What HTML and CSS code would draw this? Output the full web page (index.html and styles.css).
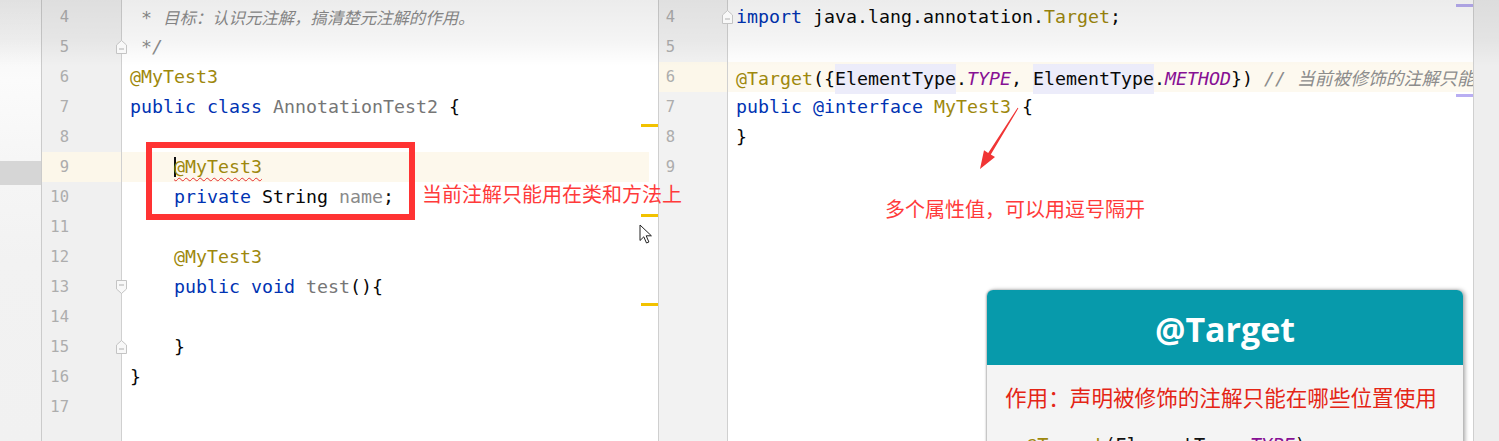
FILE: index.html
```html
<!DOCTYPE html>
<html lang="zh">
<head>
<meta charset="utf-8">
<title>Annotation</title>
<link rel="stylesheet" href="styles.css">
</head>
<body>
<div class="screen">
  <div class="side-strip"><div class="side-mark"></div></div>

  <section class="pane pane-left">
    <div class="gutter">
      <div class="gl"><span class="num">4</span></div>
      <div class="gl"><span class="num">5</span><svg class="fold" width="13" height="16" viewBox="0 0 13 16"><path d="M1.5 6 L6.5 1.5 L11.5 6 V14.5 H1.5 Z" fill="#f8f8f8" stroke="#c4c4c4"/><path d="M4 10 H9" stroke="#b0b0b0"/></svg></div>
      <div class="gl"><span class="num">6</span></div>
      <div class="gl"><span class="num">7</span></div>
      <div class="gl"><span class="num">8</span></div>
      <div class="gl cur"><span class="num">9</span></div>
      <div class="gl"><span class="num">10</span></div>
      <div class="gl"><span class="num">11</span></div>
      <div class="gl"><span class="num">12</span></div>
      <div class="gl"><span class="num">13</span><svg class="fold" width="13" height="16" viewBox="0 0 13 16"><path d="M1.5 1.5 H11.5 V10 L6.5 14.5 L1.5 10 Z" fill="#f8f8f8" stroke="#c4c4c4"/><path d="M4 6 H9" stroke="#b0b0b0"/></svg></div>
      <div class="gl"><span class="num">14</span></div>
      <div class="gl"><span class="num">15</span><svg class="fold" width="13" height="16" viewBox="0 0 13 16"><path d="M1.5 6 L6.5 1.5 L11.5 6 V14.5 H1.5 Z" fill="#f8f8f8" stroke="#c4c4c4"/><path d="M4 10 H9" stroke="#b0b0b0"/></svg></div>
      <div class="gl"><span class="num">16</span></div>
      <div class="gl"><span class="num">17</span></div>
    </div>
    <div class="code">
      <div class="ln cm"> * <span class="cjk cjk-l">目标：认识元注解，搞清楚元注解的作用。</span></div>
      <div class="ln cm"> */</div>
      <div class="ln"><span class="an">@MyTest3</span></div>
      <div class="ln"><span class="kw">public class</span> <span class="dim">AnnotationTest2</span> {</div>
      <div class="ln"></div>
      <div class="ln cur">    <span class="caret"></span><span class="an err">@MyTest3</span></div>
      <div class="ln">    <span class="kw">private</span> String <span class="dim2">name</span>;</div>
      <div class="ln"></div>
      <div class="ln">    <span class="an">@MyTest3</span></div>
      <div class="ln">    <span class="kw">public void</span> <span class="dim">test</span>(){</div>
      <div class="ln"></div>
      <div class="ln">    }</div>
      <div class="ln">}</div>
      <div class="ln"></div>
      <span class="mark mark-y m1"></span>
      <span class="mark mark-y m2"></span>
      <span class="mark mark-y m3"></span>
    </div>
  </section>

  <section class="pane pane-right">
    <div class="gutter">
      <div class="gl"><span class="num">4</span><svg class="fold" width="13" height="16" viewBox="0 0 13 16"><path d="M1.5 6 L6.5 1.5 L11.5 6 V14.5 H1.5 Z" fill="#f8f8f8" stroke="#c4c4c4"/><path d="M4 10 H9" stroke="#b0b0b0"/></svg></div>
      <div class="gl"><span class="num">5</span></div>
      <div class="gl cur"><span class="num">6</span></div>
      <div class="gl"><span class="num">7</span></div>
      <div class="gl"><span class="num">8</span></div>
      <div class="gl"><span class="num">9</span></div>
    </div>
    <div class="code">
      <div class="ln"><span class="kw">import</span> java.lang.annotation.<span class="an">Target</span>;</div>
      <div class="ln"></div>
      <div class="ln cur"><span class="an">@Target</span>({<span class="hl">ElementType</span>.<span class="const">TYPE</span>, <span class="hl">ElementType</span>.<span class="const">METHOD</span>}) <span class="cm">// <span class="cjk cjk-r">当前被修饰的注解只能用在类和方法上</span></span></div>
      <div class="ln"><span class="kw">public @interface</span> <span class="an">MyTest3</span> {</div>
      <div class="ln">}</div>
      <div class="ln"></div>
      <span class="mark mark-p p1"></span>
      <span class="mark mark-p p2"></span>
    </div>
  </section>

  <div class="right-strip"></div>

  <div class="top-shade"></div>

  <div class="callout-box"></div>
  <p class="note note-1">当前注解只能用在类和方法上</p>
  <p class="note note-2">多个属性值，可以用逗号隔开</p>

  <svg class="arrow" width="60" height="80" viewBox="0 0 60 80">
    <polygon points="48.4,8.3 47.6,7.7 18.2,52.9 14,50.3 10,69 25,57.1 20.8,54.5" fill="#f03535"/>
  </svg>

  <svg class="pointer" width="14" height="21" viewBox="0 0 14 21">
    <path d="M1 1 V16.5 L4.8 12.8 L7.5 19 L9.9 18 L7.2 11.8 L12.4 11.8 Z" fill="#fff" stroke="#222" stroke-width="1" stroke-linejoin="round"/>
  </svg>

  <div class="card">
    <div class="card-head">@Target</div>
    <div class="card-body">
      <p class="card-desc">作用：声明被修饰的注解只能在哪些位置使用</p>
      <div class="card-code"><span class="an">@Target</span>(ElementType.<span class="const">TYPE</span>)</div>
    </div>
  </div>
</div>
</body>
</html>
```

FILE: styles.css
```css
* { box-sizing: border-box; }

body {
  margin: 0;
  width: 1499px;
  height: 441px;
  overflow: hidden;
  background: #ffffff;
  font-family: "DejaVu Sans Mono", "Noto Sans CJK SC", monospace;
}

.screen {
  position: relative;
  display: flex;
  width: 1499px;
  height: 441px;
}

/* far-left strip */
.side-strip {
  width: 42px;
  flex: none;
  border-right: 1px solid #cbcbcb;
  padding-top: 161px;
  background: linear-gradient(#f3f3f3 0, #fbfbfb 80px, #f6f6f6 160px, #f2f2f2 260px, #f1f1f1);
}
.side-mark {
  height: 24px;
  background: #d6d6d6;
}

/* editor panes */
.pane {
  display: flex;
  height: 100%;
  flex: none;
}
.pane-right {
  border-left: 1px solid #cfcfcf;
  border-right: 1px solid #cfcfcf;
}

.gutter {
  flex: none;
  padding-top: 2px;
  background: #f0f0f0;
  border-right: 1px solid #d0d0d0;
}
.pane-left .gutter { width: 80px; }
.pane-right .gutter { width: 69px; background: #f2f2f2; }

.gl {
  height: 30px;
  display: flex;
  align-items: center;
  font-size: 15.5px;
  color: #adadad;
}
.pane-left .gl .num { width: 27px; padding-left: 6px; text-align: right; flex: none; }
.pane-right .gl .num { width: 16px; text-align: right; flex: none; }
.fold {
  margin-left: auto;
  margin-right: -7px;
  position: relative;
  z-index: 2;
}
.gl.cur { background: #fcf7ea; }

.code {
  position: relative;
  padding-top: 2px;
  background: #ffffff;
  overflow: hidden;
}
.pane-left .code { width: 536px; }
.pane-right .code { width: 745px; }

.ln {
  height: 30px;
  line-height: 30px;
  padding-left: 8px;
  white-space: pre;
  font-size: 18.27px;
  color: #080808;
}
.pane-left .ln.cur { background: #fdf8ec; margin-right: 9px; }
.pane-right .ln.cur { background: #fdf9ef; }

.kw { color: #0033b3; }
.an { color: #9e880d; }
.cm { color: #8c8c8c; font-style: italic; }
.dim { color: #767676; }
.dim2 { color: #8a8a8a; }
.const { color: #871094; font-style: italic; }
.hl {
  display: inline-block;
  height: 30px;
  background: #ececfa;
}
.cjk { font-family: "Noto Sans CJK SC", sans-serif; }
.cjk-l { font-size: 16.4px; }
.cjk-r { font-size: 17.8px; }

.err {
  text-decoration: underline wavy #e53030;
  text-decoration-thickness: 1px;
  text-underline-offset: 4px;
}
.caret {
  display: inline-block;
  width: 2px;
  height: 20px;
  margin-right: -2px;
  vertical-align: -4px;
  background: #111;
}

/* overview markers */
.mark {
  position: absolute;
  right: 0;
  width: 17px;
  height: 3px;
}
.mark-y { background: #f2c200; }
.m1 { top: 124px; }
.m2 { top: 214px; }
.m3 { top: 303px; }
.mark-p { background: #b9aef2; }
.p1 { top: 4px; }
.p2 { top: 94px; }

.right-strip {
  flex: 1;
  background: #eeeeee;
}

/* top darkening of the recording */
.top-shade {
  position: absolute;
  left: 0;
  top: 0;
  width: 1499px;
  height: 66px;
  pointer-events: none;
  background: linear-gradient(rgba(0, 0, 0, 0.075), rgba(0, 0, 0, 0.045) 40px, rgba(0, 0, 0, 0) 66px);
}

/* annotations */
.callout-box {
  position: absolute;
  left: 146px;
  top: 142px;
  width: 269px;
  height: 78px;
  border: 6px solid #ff3333;
}

.note {
  position: absolute;
  margin: 0;
  font-family: "Noto Sans CJK SC", sans-serif;
  font-size: 20px;
  line-height: 24px;
  color: #ff3a3a;
  white-space: nowrap;
}
.note-1 { left: 422px; top: 182px; }
.note-2 { left: 885px; top: 197px; }

.arrow {
  position: absolute;
  left: 970px;
  top: 100px;
}

.pointer {
  position: absolute;
  left: 639px;
  top: 224px;
}

/* info card */
.card {
  position: absolute;
  left: 987px;
  top: 290px;
  width: 476px;
  height: 170px;
  border-radius: 6px 6px 0 0;
  overflow: hidden;
  background: #f4f4f4;
  box-shadow: 2px 0 4px rgba(0, 0, 0, 0.35), -1px 0 2px rgba(0, 0, 0, 0.25);
}
.card-head {
  height: 75px;
  display: flex;
  align-items: center;
  justify-content: center;
  background: #079aab;
  color: #ffffff;
  font-family: "Open Sans", "Noto Sans", sans-serif;
  font-weight: 700;
  font-size: 34px;
  padding-top: 2px;
}
.card-body {
  padding: 17px 18px 0 18px;
}
.card-desc {
  margin: 0;
  font-family: "Noto Sans CJK SC", sans-serif;
  font-size: 21.6px;
  line-height: 30px;
  color: #e42516;
  white-space: nowrap;
}
.card-code {
  margin-top: 22px;
  margin-left: 21px;
  font-size: 18.6px;
  line-height: 24px;
  color: #111;
  white-space: pre;
}
```
